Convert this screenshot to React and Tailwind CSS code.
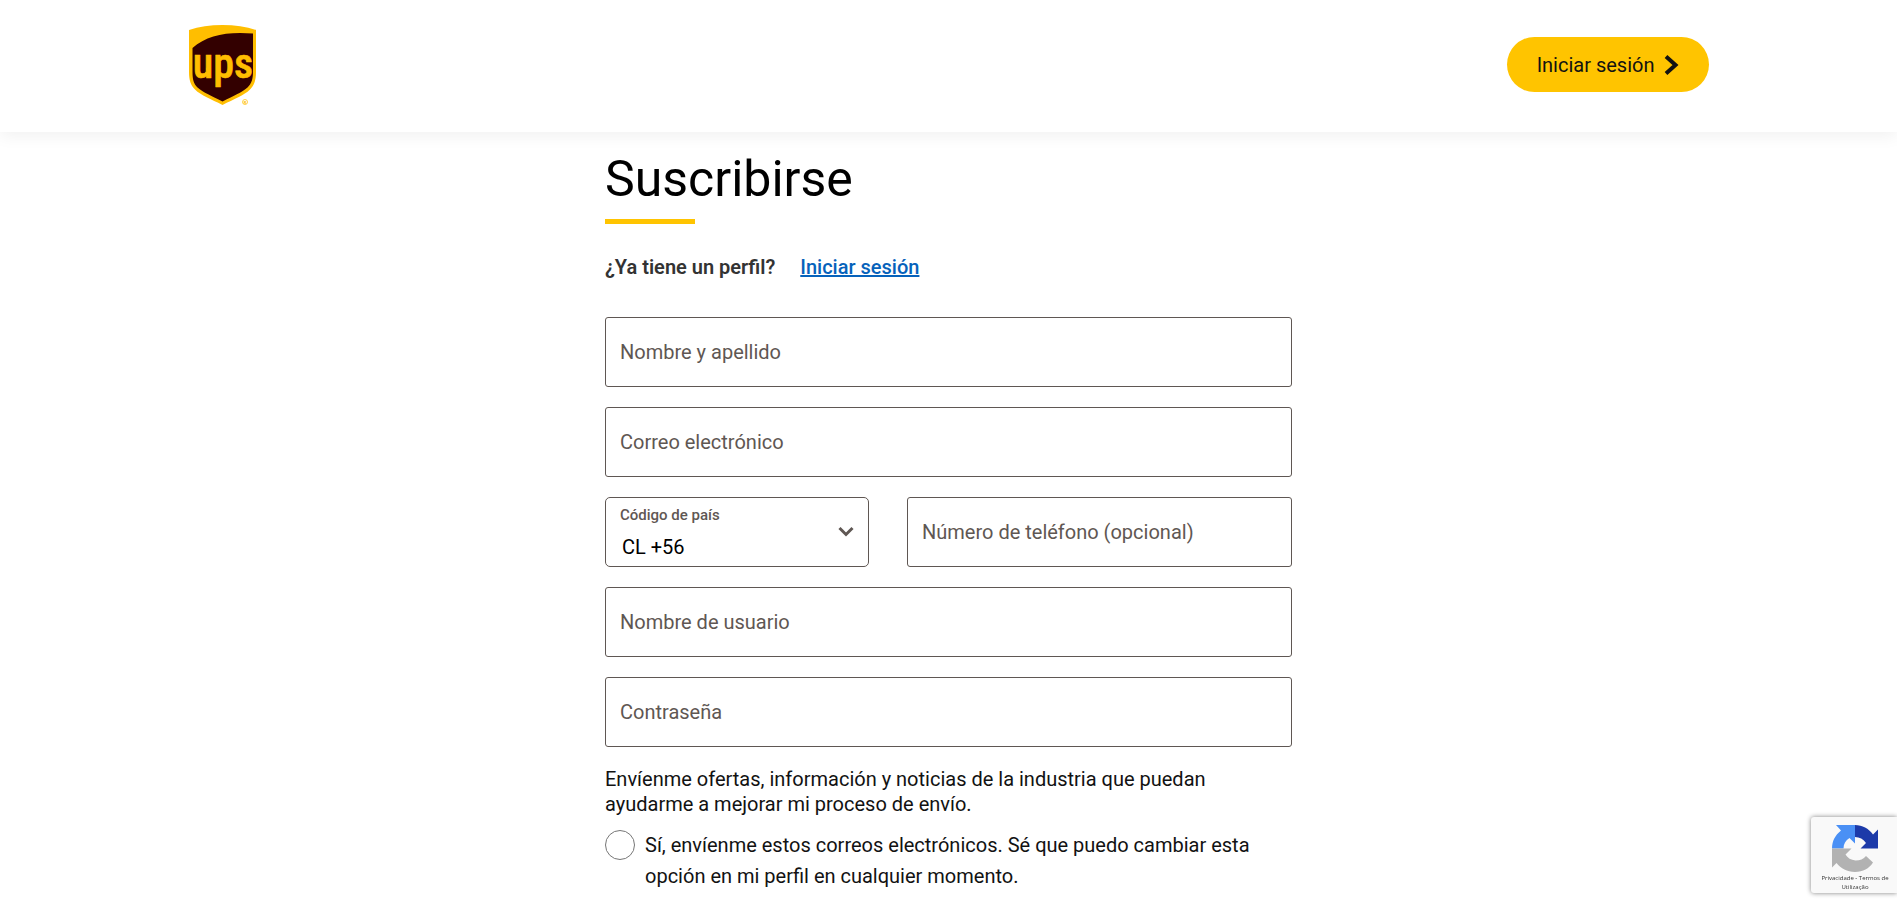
import { useState } from 'react'

const FONT = 'font-[Roboto,"Liberation_Sans",sans-serif]'

const COUNTRIES = [
  { id: 'CL', code: '+56' },
  { id: 'AR', code: '+54' },
  { id: 'BR', code: '+55' },
  { id: 'PE', code: '+51' },
]

export default function App() {
  const [form, setForm] = useState({ name: '', email: '', country: 'CL', phone: '', user: '', password: '' })
  const [offers, setOffers] = useState(false)

  const update = (field) => (e) => setForm({ ...form, [field]: e.target.value })

  return (
    <div className={`${FONT} bg-white text-[#121212] text-xl`}>
      <Header />

      <main className="max-w-[687px] mx-auto pt-5">
        <h1 className="text-[50px] leading-[54px] text-black">Suscribirse</h1>
        <div className="w-[90px] h-[5px] mt-[13px] bg-[#ffc400]" />

        <p className="flex gap-[25px] mt-[29px] leading-7">
          <span className="font-semibold text-[#333333]">¿Ya tiene un perfil?</span>
          <a href="#login" className="font-medium text-[#0662bb] underline">Iniciar sesión</a>
        </p>

        <form className="mt-9 space-y-5">
          <Field id="name" label="Nombre y apellido" value={form.name} onChange={update('name')} />
          <Field id="email" type="email" label="Correo electrónico" value={form.email} onChange={update('email')} />

          <div className="flex gap-[38px]">
            <CountrySelect value={form.country} onChange={update('country')} />
            <Field id="phone" type="tel" label="Número de teléfono (opcional)" value={form.phone} onChange={update('phone')} />
          </div>

          <Field id="user" label="Nombre de usuario" value={form.user} onChange={update('user')} />
          <Field id="password" type="password" label="Contraseña" value={form.password} onChange={update('password')} />

          <fieldset>
            <legend className="pr-10 leading-[25px]">
              Envíenme ofertas, información y noticias de la industria que puedan ayudarme a mejorar mi proceso de envío.
            </legend>
            <div className="flex items-start gap-[10px] mt-[13px]">
              <input
                id="offers"
                type="radio"
                checked={offers}
                onChange={() => setOffers(true)}
                className="appearance-none size-[30px] shrink-0 rounded-full border border-[#767676] checked:border-8"
              />
              <label htmlFor="offers" className="leading-[31px]">
                Sí, envíenme estos correos electrónicos. Sé que puedo cambiar esta opción en mi perfil en cualquier momento.
              </label>
            </div>
          </fieldset>
        </form>
      </main>

      <CaptchaBadge />
    </div>
  )
}

function Header() {
  return (
    <header className="shadow-[0_4px_16px_rgba(0,0,0,0.06)]">
      <div className="flex items-center justify-between h-[132px] pb-[3px] max-w-[1520px] mx-auto">
        <a href="#home" aria-label="UPS"><Logo /></a>
        <button className="flex items-center gap-2 h-[55px] px-[30px] rounded-full bg-[#ffc400]">
          Iniciar sesión
          <svg width="16" height="22" viewBox="0 0 16 22" fill="none" stroke="#121212" strokeWidth="4">
            <path d="M3 2.500l9.500 8.500L3 19.500" />
          </svg>
        </button>
      </div>
    </header>
  )
}

function Logo() {
  return (
    <svg width="68" height="82" viewBox="0 -1 68 82">
      <path fill="#ffbe00" d="M0 5C10 1.500 21 0 33.500 0S57 1.500 67 5v42c0 7.500-1.500 13-6 17.500C55 70.500 45 74 33.500 80 22 74 12 70.500 6 64.500 1.500 60 0 54.500 0 47z" />
      <path fill="#330000" d="M3.500 23C18 10 38 6.500 64 8.500V47c0 7-1.500 11.500-5.500 15.500C53 67.500 44 71 33.500 76.500 23 71 14 67.500 8.500 62.500 4.500 58.500 3.500 54 3.500 47z" />
      <text x="34" y="53" textAnchor="middle" fontSize="42" fontWeight="500" fill="#ffbe00" stroke="#ffbe00" strokeWidth=".6" fontFamily="'Roboto Condensed', Roboto, sans-serif">ups</text>
      <circle cx="56" cy="77" r="2.500" fill="none" stroke="#ffbe00" strokeWidth=".7" />
      <text x="56" y="78.500" textAnchor="middle" fontSize="4" fontWeight="700" fill="#ffbe00" fontFamily="Roboto, sans-serif">R</text>
    </svg>
  )
}

function Field({ id, label, type = 'text', value, onChange }) {
  return (
    <div className="relative flex-1">
      <input
        id={id}
        type={type}
        value={value}
        onChange={onChange}
        placeholder=" "
        className="peer block w-full h-[70px] px-[15px] pt-5 rounded-[3px] border border-[#5f5753] outline-none focus:border-[#0662bb]"
      />
      <label
        htmlFor={id}
        className="absolute left-[15px] top-5 leading-[30px] text-[#5f5753] pointer-events-none peer-focus:top-1 peer-focus:text-base peer-[:not(:placeholder-shown)]:top-1 peer-[:not(:placeholder-shown)]:text-base"
      >
        {label}
      </label>
    </div>
  )
}

function CountrySelect({ value, onChange }) {
  return (
    <div className="relative flex flex-col w-[264px] h-[70px] pt-[7px] rounded-[5px] border border-[#5f5753]">
      <label htmlFor="country" className="px-[14px] text-[15px] leading-5 font-medium text-[#5f5753]">Código de país</label>
      <select id="country" value={value} onChange={onChange} className="appearance-none flex-1 pl-4 pt-[2px] text-black bg-transparent outline-none">
        {COUNTRIES.map(c => (
          <option key={c.id} value={c.id}>{c.id} {c.code}</option>
        ))}
      </select>
      <svg className="absolute right-[14px] top-7 pointer-events-none" width="16" height="12" viewBox="0 0 16 12" fill="none" stroke="#5f5753" strokeWidth="3">
        <path d="M1.500 2L8 8.500 14.500 2" />
      </svg>
    </div>
  )
}

function CaptchaBadge() {
  return (
    <aside className="fixed right-0 bottom-[14px] w-[86px] h-[76px] pt-2 pl-[2px] rounded-l-[3px] bg-[#f9f9f9] shadow-[0_0_5px_gray] text-center">
      <svg className="mx-auto" width="46" height="47" viewBox="0 0 46 47">
        <path fill="#1c3aa9" d="M23 0c7.500 0 13.500 3.500 18 9.500L46 4.500v19H28.500l5.500-5.500c-2.500-4-6.500-6-11-6z" />
        <path fill="#4a90f5" d="M23 0v18.500L17.500 13C13.500 15.500 11.500 19 11.500 23.500H0C0 16 3 10.500 9 5.500L4 0z" />
        <path fill="#b2b2b2" d="M0 23.500v19L4.500 38C9 43.500 15 47 23 47s14-3.500 18-9.500l-7-6.500c-2.500 3-6 4.500-10.500 4.500-4.500-.5-8-2.500-10-6l6-6z" />
      </svg>
      <p className="mt-[2px] font-['Open_Sans',sans-serif] text-[6px] leading-[9px] text-[#333333]">
        <a href="#privacy">Privacidade</a> - <a href="#terms">Termos de<br />Utilização</a>
      </p>
    </aside>
  )
}
